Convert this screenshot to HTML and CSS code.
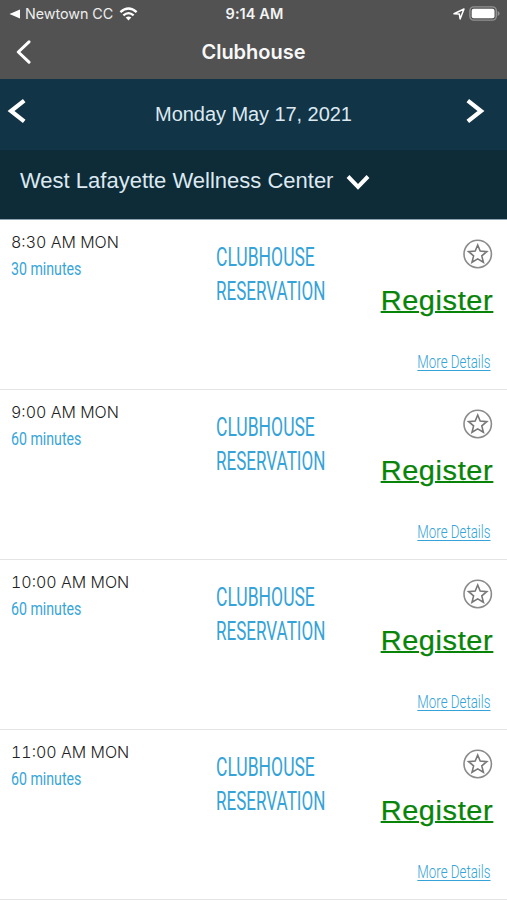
FILE: index.html
```html
<!DOCTYPE html>
<html lang="en">
<head>
<meta charset="utf-8">
<title>Clubhouse</title>
<link rel="stylesheet" href="styles.css">
</head>
<body>
<svg class="defs" width="0" height="0" aria-hidden="true">
  <symbol id="star" viewBox="0 0 30 30">
    <circle cx="14.7" cy="15" r="13.7" fill="none" stroke="#8b8b8b" stroke-width="1.6"/>
    <path d="M14.7 6l2.5 6.1 6.6.5-5 4.3 1.6 6.4-5.7-3.4L9 23.3l1.6-6.4-5-4.3 6.6-.5z" fill="none" stroke="#777" stroke-width="1.6"/>
  </symbol>
</svg>
<header class="top">
  <div class="status">
    <div class="carrier">
      <svg width="11" height="10" viewBox="0 0 11 10"><path d="M.5 5L11 .5v9z" fill="#fff"/></svg>
      <span class="app">Newtown CC</span>
      <svg class="wifi" width="19" height="14" viewBox="0 0 20 15"><g fill="none" stroke="#fff" stroke-width="2.5"><path d="M1.3 5.6Q10-2.2 18.7 5.6"/><path d="M4.5 8.9Q10 4.2 15.5 8.9"/></g><path d="M7 11.3Q10 9 13 11.3L10 14.4z" fill="#fff"/></svg>
    </div>
    <span class="clock">9:14 AM</span>
    <div class="power">
      <svg width="12" height="12" viewBox="0 0 12 12"><path d="M1 5.7L11 1 7.1 10.9 6.3 6z" fill="none" stroke="#fff" stroke-width="1.5" stroke-linejoin="round"/></svg>
      <svg width="31" height="15" viewBox="0 0 31 15"><rect x=".9" y=".9" width="26.4" height="13.2" rx="3.8" fill="none" stroke="#929292" stroke-width="1.4"/><rect x="2.7" y="2.7" width="22.8" height="9.6" rx="2" fill="#fff"/><path d="M28.6 5v5q2-.8 2-2.5T28.6 5z" fill="#929292"/></svg>
    </div>
  </div>
  <div class="nav">
    <svg width="15" height="24" viewBox="0 0 15 24"><path d="M13 1.8L2.3 12 13 22.2" fill="none" stroke="#fff" stroke-width="3" stroke-linecap="round" stroke-linejoin="round"/></svg>
    <h1>Clubhouse</h1>
  </div>
</header>
<div class="datebar">
  <svg width="20" height="26" viewBox="0 0 20 26"><path d="M17.2 2.7L4 13l13.2 10.3" fill="none" stroke="#fff" stroke-width="4.2"/></svg>
  <span class="date">Monday May 17, 2021</span>
  <svg width="20" height="26" viewBox="0 0 20 26"><path d="M2.8 2.7L16 13 2.8 23.3" fill="none" stroke="#fff" stroke-width="4.2"/></svg>
</div>
<div class="location">
  <span class="place">West Lafayette Wellness Center</span>
  <svg width="24" height="17" viewBox="0 0 24 17"><path d="M2 2.5L12 12.8 22 2.5" fill="none" stroke="#fff" stroke-width="4"/></svg>
</div>
<main>
  <section class="slot">
    <div class="when"><div class="time">8:30 AM MON</div><div class="mins">30 minutes</div></div>
    <div class="name"><div class="n1">CLUBHOUSE</div><div class="n2">RESERVATION</div></div>
    <div class="actions"><svg class="fav"><use href="#star"/></svg><a class="register">Register</a><a class="more">More Details</a></div>
  </section>
  <section class="slot">
    <div class="when"><div class="time">9:00 AM MON</div><div class="mins">60 minutes</div></div>
    <div class="name"><div class="n1">CLUBHOUSE</div><div class="n2">RESERVATION</div></div>
    <div class="actions"><svg class="fav"><use href="#star"/></svg><a class="register">Register</a><a class="more">More Details</a></div>
  </section>
  <section class="slot">
    <div class="when"><div class="time">10:00 AM MON</div><div class="mins">60 minutes</div></div>
    <div class="name"><div class="n1">CLUBHOUSE</div><div class="n2">RESERVATION</div></div>
    <div class="actions"><svg class="fav"><use href="#star"/></svg><a class="register">Register</a><a class="more">More Details</a></div>
  </section>
  <section class="slot">
    <div class="when"><div class="time">11:00 AM MON</div><div class="mins">60 minutes</div></div>
    <div class="name"><div class="n1">CLUBHOUSE</div><div class="n2">RESERVATION</div></div>
    <div class="actions"><svg class="fav"><use href="#star"/></svg><a class="register">Register</a><a class="more">More Details</a></div>
  </section>
</main>
</body>
</html>
```
FILE: styles.css
```css
* { box-sizing: border-box; }
body { margin: 0; width: 507px; height: 900px; overflow: hidden; background: #fff; font-family: "Liberation Sans", sans-serif; }
svg { display: block; flex: none; }
.defs { position: absolute; }
.top { height: 79px; background: #525252; color: #fff; font-family: Inter, sans-serif; }
.status { height: 27px; padding: 0 7px 0 9px; display: grid; grid-template-columns: 1fr auto 1fr; align-items: center; }
.carrier { display: flex; align-items: center; gap: 5px; }
.app { font-size: 14.3px; letter-spacing: -.03px; color: #eee; white-space: nowrap; }
.wifi { margin-left: 1px; }
.clock { font-size: 14.5px; font-weight: 600; letter-spacing: .1px; color: #f4f4f4; }
.power { display: flex; align-items: center; justify-content: flex-end; gap: 4px; }
.nav { height: 50px; padding: 0 16px; display: grid; grid-template-columns: 15px 1fr 15px; align-items: center; }
h1 { margin: 0; text-align: center; font-size: 20px; font-weight: 600; color: #f8f8f8; }
.datebar { height: 71px; padding: 0 22px 7px 7px; display: flex; align-items: center; justify-content: space-between; background: #123447; color: #dce9f1; }
.date { font-size: 20px; letter-spacing: -.06px; padding-top: 6px; margin-left: 15px; }
.location { height: 70px; padding: 0 20px 8px; display: flex; align-items: center; gap: 13px; background: #0e2b38; color: #dce9f1; border-bottom: 1px solid #91a5b0; }
.location svg { margin-top: 3px; }
.place { font-size: 22px; white-space: nowrap; }
.slot { height: 170px; padding: 0 14px 0 11px; display: grid; grid-template-columns: 205px 1fr 114px; border-bottom: 1.5px solid #e4e4e4; white-space: nowrap; }
.when { padding-top: 12px; }
.time { font-family: Inter, sans-serif; font-weight: 300; font-size: 16px; line-height: 20px; font-variant-numeric: tabular-nums; color: #222; }
.mins { font-family: Roboto, sans-serif; font-size: 19px; line-height: 24px; margin-top: 5px; color: #38a5da; width: max-content; transform: scaleX(.745); transform-origin: left; }
.name { padding-top: 21px; font-family: Roboto, sans-serif; font-size: 25px; line-height: 34.3px; color: #35a3d8; }
.n1, .n2 { width: max-content; transform: scaleX(.7); transform-origin: left; }
.n2 { transform: scaleX(.682); }
.actions { display: flex; flex-direction: column; align-items: flex-end; padding-top: 19px; }
.fav { width: 30px; height: 30px; }
.register { margin-top: 15px; font-size: 27px; line-height: 34px; letter-spacing: .6px; color: #088408; -webkit-text-stroke: .25px #088408; text-decoration: underline; text-decoration-thickness: 2px; text-underline-offset: 1px; transform: scaleX(1.07); transform-origin: right; }
.more { margin: 32px 2px 0 0; font-family: Roboto, sans-serif; font-weight: 300; font-size: 19px; line-height: 24px; color: #35a3d8; text-decoration: underline; text-decoration-thickness: 1px; text-underline-offset: 2px; transform: scaleX(.7); transform-origin: right; }
```
